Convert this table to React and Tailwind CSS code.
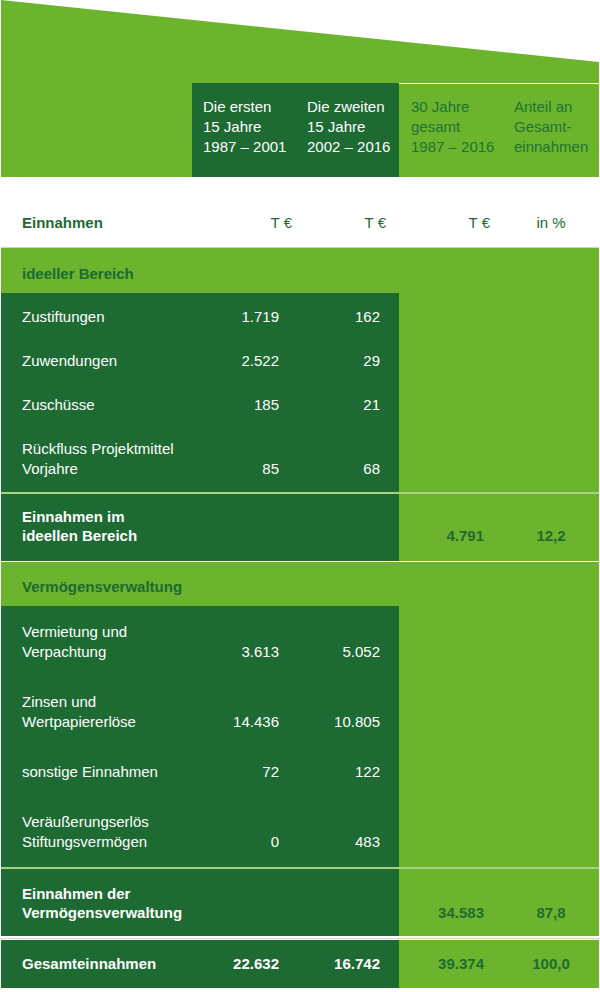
import React from "react";

function Row({ label, v1, v2 }) {
  return (
    <div className="flex items-end text-white">
      <div className="w-[191px] pl-[21px]">
        {label.map((l, i) => (
          <div key={i}>{l}</div>
        ))}
      </div>
      <div className="w-[104px] pr-[17px] text-right">{v1}</div>
      <div className="w-[103px] pr-[19px] text-right">{v2}</div>
    </div>
  );
}

function Subtotal({ label, v3, v4, pt, pb }) {
  return (
    <div className="flex">
      <div className={`w-[398px] bg-[#1d6a32] pl-[21px] font-bold leading-[19px] text-white ${pt} ${pb}`}>
        {label.map((l, i) => (
          <div key={i}>{l}</div>
        ))}
      </div>
      <div className={`flex flex-1 items-end font-bold leading-[19px] text-[#236a31] ${pb}`}>
        <div className="w-[104px] pr-[19px] text-right">{v3}</div>
        <div className="flex-1 text-center">{v4}</div>
      </div>
    </div>
  );
}

export default function App() {
  return (
    <div className="w-[600px] min-h-[992px] bg-white px-px font-['Liberation_Sans',Arial,sans-serif] text-[15px] leading-[20px]">
      {/* Header with slanted top */}
      <div className="flex h-[177px] flex-col justify-end bg-[#6cb42d] [clip-path:polygon(0_0,100%_62px,100%_100%,0_100%)]">
        <div className="flex h-[94px]">
          <div className="w-[191px]" />
          <div className="flex w-[207px] bg-[#1d6a32] pt-[14px] text-white">
            <div className="w-[104px] pl-[11px]">
              <div>Die ersten</div>
              <div>15 Jahre</div>
              <div>1987 – 2001</div>
            </div>
            <div className="w-[103px] pl-[11px]">
              <div>Die zweiten</div>
              <div>15 Jahre</div>
              <div>2002 – 2016</div>
            </div>
          </div>
          <div className="flex flex-1 border-t border-white pt-[13px] text-[#237233]">
            <div className="w-[104px] pl-[12px]">
              <div>30 Jahre</div>
              <div>gesamt</div>
              <div>1987 – 2016</div>
            </div>
            <div className="flex-1 pl-[11px]">
              <div>Anteil an</div>
              <div>Gesamt-</div>
              <div>einnahmen</div>
            </div>
          </div>
        </div>
      </div>

      {/* Column units */}
      <div className="flex h-[71px] border-b border-[#cdd5c9] pt-[36px] text-[#1d6a32]">
        <div className="w-[191px] pl-[21px] font-bold">Einnahmen</div>
        <div className="w-[104px] pr-[4px] text-right">T €</div>
        <div className="w-[103px] pr-[13px] text-right">T €</div>
        <div className="w-[104px] pr-[13px] text-right">T €</div>
        <div className="flex-1 text-center">in %</div>
      </div>

      {/* Body */}
      <div className="bg-[#6cb42d]">
        <div className="pb-[9px] pl-[21px] pt-[16px] font-bold text-[#1d6a32]">ideeller Bereich</div>
        <div className="flex">
          <div className="flex w-[398px] flex-col gap-[24px] bg-[#1d6a32] pb-[13px] pt-[14px]">
            <Row label={["Zustiftungen"]} v1="1.719" v2="162" />
            <Row label={["Zuwendungen"]} v1="2.522" v2="29" />
            <Row label={["Zuschüsse"]} v1="185" v2="21" />
            <Row label={["Rückfluss Projektmittel", "Vorjahre"]} v1="85" v2="68" />
          </div>
        </div>
        <div className="h-[2px] bg-white/40" />
        <Subtotal label={["Einnahmen im", "ideellen Bereich"]} v3="4.791" v4="12,2" pt="pt-[13px]" pb="pb-[16px]" />
        <div className="h-px bg-white" />

        <div className="pb-[9px] pl-[21px] pt-[15px] font-bold text-[#1d6a32]">Vermögensverwaltung</div>
        <div className="flex">
          <div className="flex w-[398px] flex-col gap-[30px] bg-[#1d6a32] pb-[15px] pt-[16px]">
            <Row label={["Vermietung und", "Verpachtung"]} v1="3.613" v2="5.052" />
            <Row label={["Zinsen und", "Wertpapiererlöse"]} v1="14.436" v2="10.805" />
            <Row label={["sonstige Einnahmen"]} v1="72" v2="122" />
            <Row label={["Veräußerungserlös", "Stiftungsvermögen"]} v1="0" v2="483" />
          </div>
        </div>
        <div className="h-[2px] bg-white/40" />
        <Subtotal label={["Einnahmen der", "Vermögensverwaltung"]} v3="34.583" v4="87,8" pt="pt-[15px]" pb="pb-[14px]" />

        <div className="bg-white">
          <div className="h-[2px] bg-white" />
          <div className="h-px bg-[#cfd8c8]" />
          <div className="h-px bg-white" />
        </div>

        <div className="flex font-bold">
          <div className="flex w-[398px] bg-[#1d6a32] py-[14px] text-white">
            <div className="w-[191px] pl-[21px]">Gesamteinnahmen</div>
            <div className="w-[104px] pr-[17px] text-right">22.632</div>
            <div className="w-[103px] pr-[19px] text-right">16.742</div>
          </div>
          <div className="flex flex-1 py-[14px] text-[#236a31]">
            <div className="w-[104px] pr-[19px] text-right">39.374</div>
            <div className="flex-1 text-center">100,0</div>
          </div>
        </div>
      </div>
    </div>
  );
}
